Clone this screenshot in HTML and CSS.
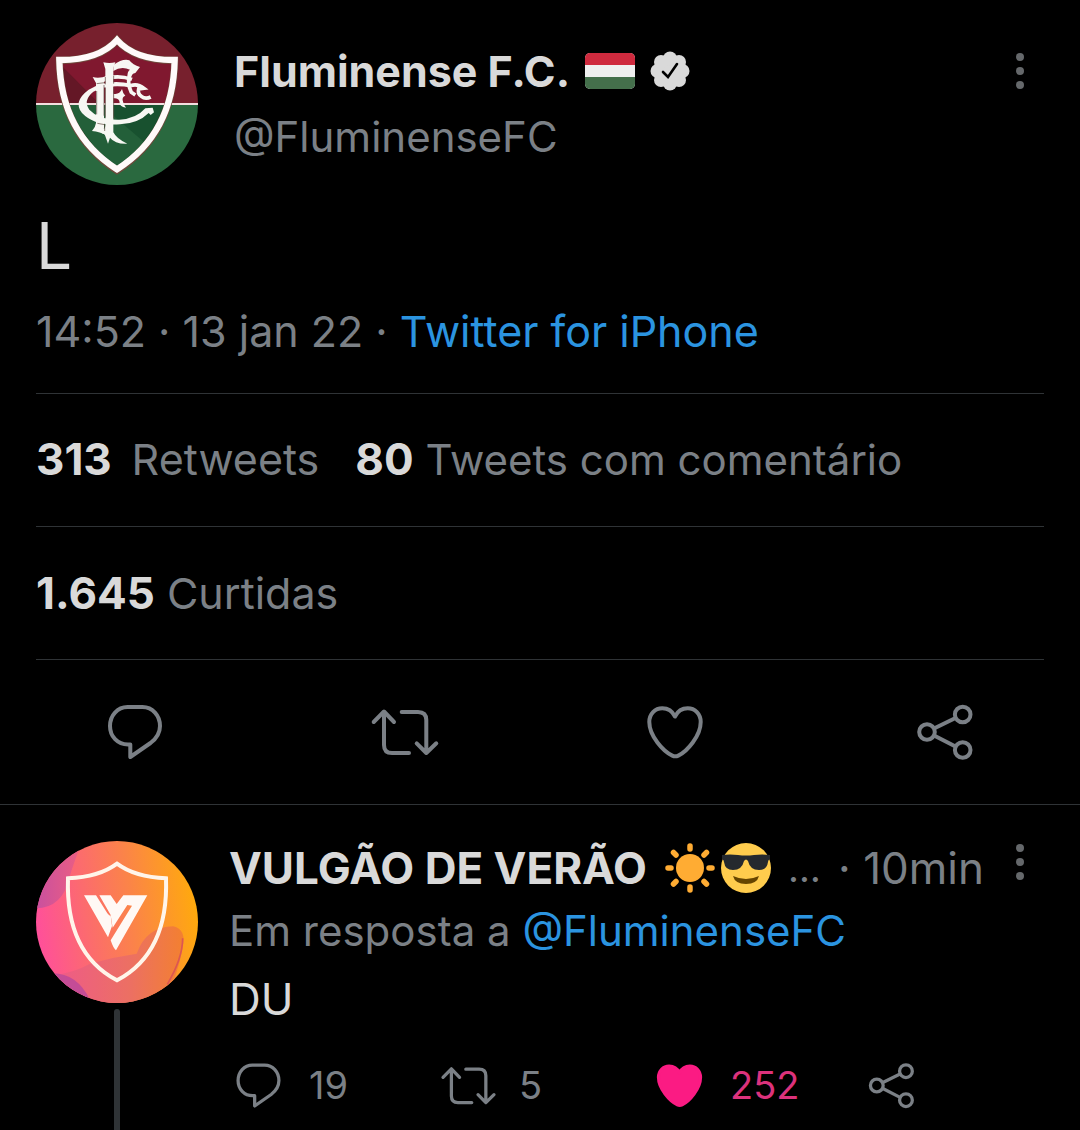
FILE: index.html
```html
<!DOCTYPE html>
<html lang="pt-BR">
<head>
<meta charset="utf-8">
<meta name="viewport" content="width=device-width, initial-scale=1">
<title>Fluminense F.C. no Twitter</title>
<link rel="stylesheet" href="styles.css">
</head>
<body>
<svg class="defs" aria-hidden="true">
  <symbol id="i-reply" viewBox="0 0 60 60"><path d="M22.500 5h15C47.500 5 55 13.500 55 24c0 7-3.500 12.500-9.500 17L25.300 55V42.500H23C12.500 42.500 5 34.500 5 24S12.500 5 22.500 5z"/></symbol>
  <symbol id="i-retweet" viewBox="0 0 70 60"><path d="M3.700 20 14 9.500 24 20M14 10v33q0 8 8 8h17M31.700 10H48q8.300 0 8.300 8v33M46.700 41.300l9.600 9.700 10-9.700"/></symbol>
  <symbol id="i-heart" viewBox="0 0 60 60"><path d="M30 14.500C27.500 9.500 23 6.300 17.300 6.300 10 6.300 4.300 12 4.300 20c0 14 14 29.500 23 33.600q3 1.400 6 0C42 49.500 55.700 34 55.700 20c0-8-5.700-13.700-13-13.700C37 6.300 32.500 9.500 30 14.500z"/></symbol>
  <symbol id="i-share" viewBox="-3 0 60 60"><circle cx="9" cy="30" r="7.800"/><circle cx="44.700" cy="12.500" r="7.800"/><circle cx="44.700" cy="48" r="7.800"/><path d="M17 26l20.500-10M17 34l20.500 10.500"/></symbol>
  <symbol id="i-more" viewBox="0 0 8 36"><circle cx="4" cy="4" r="4"/><circle cx="4" cy="18" r="4"/><circle cx="4" cy="32" r="4"/></symbol>
</svg>

<main class="thread">
  <article class="tweet">
    <header class="tweet-head">
      <svg class="avatar" viewBox="48 39 486 486" role="img" aria-label="Escudo do Fluminense">
        <clipPath id="shield"><path d="M291 92Q237 150 118 150Q122 370 291 480Q460 370 464 150Q345 150 291 92z"/></clipPath>
        <rect x="48" y="39" width="486" height="244" fill="#77202d"/>
        <rect x="48" y="283" width="486" height="242" fill="#2a693f"/>
        <g clip-path="url(#shield)">
          <rect x="100" y="80" width="380" height="203" fill="#80182f"/>
          <path d="M128 170 240 283H128z" fill="#641726"/>
          <rect x="100" y="283" width="380" height="220" fill="#18512f"/>
          <path d="M128 283H240L400 420 291 500z" fill="#235f39"/>
        </g>
        <path d="M48 282H534" stroke="#f3dfe0" stroke-width="6"/>
        <path d="M291 90Q237 152 118 151Q122 372 291 481Q460 372 464 151Q345 152 291 90z" fill="none" stroke="#6e4a3c" stroke-width="22"/>
        <path d="M291 90Q237 151 118 150Q122 370 291 478Q460 370 464 150Q345 151 291 90z" fill="none" stroke="#fffafa" stroke-width="19"/>
        <g transform="translate(150 135)" fill="#f7f7f3">
          <path d="M68 66q20 6 44-4l-10 16v138q-2 12 8 26-20-12-44-14 10-10 12-24V84z"/>
          <path d="M100 22q18 4 36 0l-6 16v194q10 20 42 34-36 2-52-18l-6 18-10-28q-8-2-12-8 14-4 14-20V42z"/>
          <path d="M130 30q28-20 48-14 10 14 32 20l-14 18q-12 2-14 16l-10-4q0-18 8-22-26-12-50 4z"/>
          <path d="M130 116q18 4 26-14 2 12 10 20-10 4-8 14 2 14 10 22-20-2-20-20-4-10-18-8z"/>
          <path d="M184 86Q110 70 56 104Q8 140 36 174Q74 214 150 208Q204 206 236 174l6 6 10-8-4-14-22 2Q198 192 148 194Q88 196 58 164Q38 136 70 110Q118 86 184 98z"/>
          <path d="M88 76q42-28 100-8l-4 10Q136 62 94 84z"/>
        </g>
        <g transform="translate(150 135)" fill="none" stroke="#f7f7f3" stroke-width="11">
          <path d="M180 58Q170 84 184 112L196 120"/>
          <path d="M182 92Q202 84 222 100L206 102Q202 116 214 124Q226 134 242 126"/>
        </g>
        <g transform="translate(150 135)" fill="none" stroke="#59443a" stroke-width="2">
          <path d="M106 66v22M131 62v24M102 90v92M106 98v90M131 96v94M80 108v70M104 208v20M80 86l24-3M82 205l22 4"/>
        </g>
      </svg>
      <div class="identity">
        <h1 class="name">Fluminense F.C.
          <svg class="flag" viewBox="0 0 50 36" role="img" aria-label="Bandeira"><rect width="50" height="36" rx="5" fill="#efefef"/><path d="M0 12V5a5 5 0 0 1 5-5h40a5 5 0 0 1 5 5v7z" fill="#cf2a3e"/><path d="M0 24v7a5 5 0 0 0 5 5h40a5 5 0 0 0 5-5v-7z" fill="#446f4b"/></svg>
          <svg class="badge" viewBox="0 0 40 40" role="img" aria-label="Conta verificada"><g fill="#d9d9d9"><circle cx="20" cy="20" r="16"/><circle cx="20" cy="7.500" r="7"/><circle cx="20" cy="32.500" r="7"/><circle cx="7.500" cy="20" r="7"/><circle cx="32.500" cy="20" r="7"/><circle cx="11" cy="11" r="7"/><circle cx="29" cy="11" r="7"/><circle cx="11" cy="29" r="7"/><circle cx="29" cy="29" r="7"/></g><path d="M13 21l5 5 9-13" fill="none" stroke="#000" stroke-width="2.600" stroke-linecap="round"/></svg>
        </h1>
        <p class="handle">@FluminenseFC</p>
      </div>
      <button class="more" type="button" aria-label="Mais opções"><svg width="8" height="36"><use href="#i-more"/></svg></button>
    </header>
    <p class="tweet-text">L</p>
    <p class="meta">14:52 · 13 jan 22 · <a href="#source">Twitter for iPhone</a></p>
    <div class="stats">
      <a href="#retweets"><b>313</b> <span class="wide">Retweets</span></a>
      <a href="#quotes"><b>80</b> Tweets com comentário</a>
    </div>
    <div class="stats likes"><a href="#likes"><b>1.645</b> Curtidas</a></div>
    <hr>
  </article>

  <div class="actions">
    <button type="button" aria-label="Responder"><svg class="icon"><use href="#i-reply"/></svg></button>
    <button type="button" aria-label="Retweetar"><svg class="icon icon-wide"><use href="#i-retweet"/></svg></button>
    <button type="button" aria-label="Curtir"><svg class="icon"><use href="#i-heart"/></svg></button>
    <button type="button" aria-label="Compartilhar"><svg class="icon"><use href="#i-share"/></svg></button>
  </div>

  <article class="reply">
    <div class="rail">
      <svg class="avatar" viewBox="48 48 486 486" role="img" aria-label="Vulgão">
        <defs>
          <linearGradient id="glow" x1="0" y1=".55" x2="1" y2=".42"><stop offset="0" stop-color="#ff4f9b"/><stop offset=".3" stop-color="#fc6a70"/><stop offset=".6" stop-color="#fb8448"/><stop offset="1" stop-color="#ffaa0c"/></linearGradient>
          <linearGradient id="blob" x1="0" y1="0" x2="1" y2="0"><stop offset="0" stop-color="#ee5a8a"/><stop offset=".6" stop-color="#ec7062"/><stop offset="1" stop-color="#f38030"/></linearGradient>
          <linearGradient id="corner" x1="0" y1="0" x2="1" y2="0"><stop offset="0" stop-color="#c9509f"/><stop offset="1" stop-color="#ee5f80"/></linearGradient>
        </defs>
        <rect x="48" y="48" width="486" height="486" fill="url(#glow)"/>
        <path d="M48 48h140q-22 50-40 110-20 90-100 92z" fill="url(#corner)"/>
        <path d="M100 450q60-6 110-34 70-20 140-30 30-82 110-82 40 10 28 62-14 90-60 168H100z" fill="url(#blob)"/>
        <path d="M90 445q80-4 120 80l-20 20z" fill="#c44c96"/>
        <path d="M488 340q0 60-46 138" fill="none" stroke="#dc5652" stroke-width="5"/>
        <path d="M291 116Q238 156 144 160Q136 384 291 466Q446 384 438 160Q344 156 291 116z" fill="none" stroke="#fff5ea" stroke-width="12"/>
        <g fill="#fff9f5">
          <path d="M192 211h36l34 54q8 10 10 6l4 32-12 34z"/>
          <path d="M238 211h34l18 26 20-26h72l-94 165q-8-6-16-30l64-104-14-2-44 68-6-38z"/>
        </g>
      </svg>
      <span class="line"></span>
    </div>
    <div class="reply-body">
      <header class="reply-head">
        <h2 class="name">VULGÃO DE VERÃO</h2>
        <span class="emoji">
          <svg viewBox="0 0 50 50" role="img" aria-label="Sol"><circle cx="25" cy="25" r="14" fill="#ffac33"/><path d="M25 3v3M25 44v3M3 25h3M44 25h3M8.500 9.500l2.500 2.500M39 38.500l2.500 2.500M41.500 9.500L39 12M11 38.500L8.500 41" stroke="#ffac33" stroke-width="5.500" stroke-linecap="round"/></svg>
          <svg viewBox="0 0 50 50" role="img" aria-label="Rosto com óculos escuros"><circle cx="25" cy="25" r="25" fill="#ffcc4d"/><path d="M12 33q13 6 26 0-2 8-13 8T12 33z" fill="#664500"/><path d="M1 12q8-1 16 0 8 1 16 0 8-1 16 0v4q-2 1-2 3-1 8-9 8-9 0-11-9-2-3-4 0-2 9-11 9-8 0-9-8 0-2-2-3z" fill="#25292e"/></svg>
        </span>
        <span class="dots">…</span>
        <time class="ago">· 10min</time>
        <button class="more" type="button" aria-label="Mais opções"><svg width="8" height="36"><use href="#i-more"/></svg></button>
      </header>
      <p class="replying">Em resposta a <a href="#fluminense">@FluminenseFC</a></p>
      <p class="reply-text">DU</p>
      <div class="reply-actions">
        <button type="button" aria-label="Responder, 19"><svg class="icon"><use href="#i-reply"/></svg>19</button>
        <button type="button" aria-label="Retweetar, 5"><svg class="icon icon-wide"><use href="#i-retweet"/></svg>5</button>
        <button type="button" class="liked" aria-label="Descurtir, 252"><svg class="icon"><use href="#i-heart"/></svg>252</button>
        <button type="button" aria-label="Compartilhar"><svg class="icon"><use href="#i-share"/></svg></button>
      </div>
    </div>
  </article>
</main>
</body>
</html>
```
FILE: styles.css
```css
* { box-sizing: border-box; }
body {
  margin: 0;
  background: #000;
  color: #d9d9d9;
  font-family: Inter, "Liberation Sans", sans-serif;
  font-size: 44px;
  line-height: 64px;
}
h1, h2, p { margin: 0; font-size: inherit; }
a { color: #2b94e0; text-decoration: none; }
hr { margin: 0; border: 0; border-top: 1px solid #2f3336; }
button {
  padding: 0;
  border: 0;
  background: none;
  color: #7b8086;
  font: inherit;
  cursor: pointer;
}
.defs { display: none; }
.thread { display: flex; flex-direction: column; min-height: 100vh; }

.avatar { display: block; flex: none; width: 162px; height: 162px; border-radius: 50%; }
.name { font-weight: 700; white-space: nowrap; }
.more { display: flex; flex: none; width: 48px; justify-content: center; fill: #65686b; }

.icon {
  flex: none;
  width: 60px;
  height: 60px;
  fill: none;
  stroke: #7b8086;
  stroke-width: 4;
  stroke-linecap: round;
  stroke-linejoin: round;
}
.icon-wide { width: 70px; }

/* Main tweet */
.tweet { padding: 23px 36px 0; }
.tweet-head { display: flex; gap: 36px; }
.tweet-head .more { margin: 30px 0 0 auto; }
.identity { padding-top: 16px; }
.tweet-head .name { display: flex; align-items: center; gap: 15px; font-size: 43px; }
.flag { width: 50px; height: 36px; }
.badge { width: 40px; height: 40px; }
.handle { color: #7b8086; font-size: 42px; line-height: 68px; }
.tweet-text { padding-top: 22px; font-size: 64px; line-height: 78px; }
.meta { padding: 14px 0 30px; color: #7b8086; font-size: 43px; }
.stats {
  display: flex;
  gap: 36px;
  padding: 34px 0;
  border-top: 1px solid #2f3336;
  font-size: 42px;
}
.stats a { color: #7b8086; }
.stats b { color: #d9d9d9; font-size: 44px; line-height: 1; }
.stats .wide { padding-left: 8px; font-size: 43px; line-height: 1; }
.stats.likes { font-size: 43px; }

.actions {
  display: grid;
  grid-template-columns: repeat(4, 1fr);
  padding: 42px 0;
  border-bottom: 1px solid #2f3336;
}
.actions button { display: flex; justify-content: center; }

/* Reply */
.reply { display: flex; flex: 1; gap: 31px; padding: 36px 36px 0; }
.rail { display: flex; flex: none; flex-direction: column; align-items: center; gap: 6px; }
.line { flex: 1; width: 6px; border-radius: 3px 3px 0 0; background: #2f3336; }
.reply-body { flex: 1; min-width: 0; }
.reply-head { display: flex; align-items: center; height: 54px; }
.emoji { display: flex; gap: 6px; margin-left: 18px; }
.emoji svg { width: 50px; height: 50px; }
.dots, .ago, .replying { color: #7b8086; }
.dots { margin-left: 17px; font-size: 38px; }
.ago { margin-left: auto; white-space: nowrap; }
.reply-head .more { align-self: flex-start; align-items: center; height: 42px; margin-left: 12px; }
.replying { font-size: 42px; line-height: 72px; }
.reply-actions {
  display: grid;
  grid-template-columns: 206fr 215fr 212fr 177fr;
  padding: 30px 0 14px 5px;
  font-size: 38px;
  line-height: 49px;
}
.reply-actions button { display: flex; align-items: center; gap: 26px; }
.reply-actions .icon { width: 49px; height: 49px; }
.reply-actions .icon-wide { width: 57px; margin-right: -4px; }
.reply-actions .liked { color: #dc327c; }
.liked .icon { fill: #fb1b83; stroke: #fb1b83; }
```
